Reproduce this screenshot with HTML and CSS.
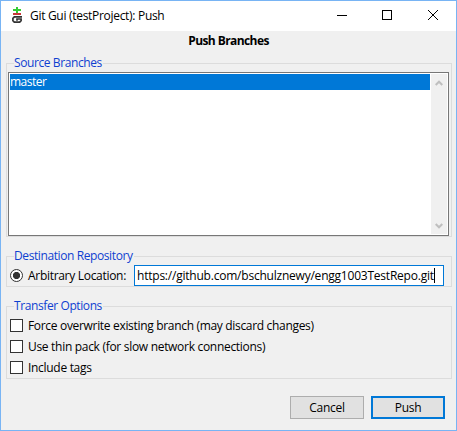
FILE: index.html
```html
<!DOCTYPE html>
<html lang="en">
<head>
<meta charset="utf-8">
<title>Git Gui (testProject): Push</title>
<link rel="stylesheet" href="styles.css">
</head>
<body>
<div class="window">
  <header class="titlebar">
    <svg class="app-icon" width="12" height="16" viewBox="0 0 12 16">
      <path fill="#33cc33" d="M4 0h2v2h3v2H6v2H4V4H1V2h3z"/>
      <path fill="#c83737" d="M1 6h8v2H1z"/>
      <path fill="none" stroke="#333" stroke-width="1.700" d="M10 9.900H2.300L.9 11.300v2.400l1.400 1.400h5.400l1.400-1.400V12H5v1.800"/>
    </svg>
    <span class="title">Git Gui (testProject): Push</span>
    <svg class="controls" width="104" height="12" viewBox="0 0 104 12" fill="none" stroke="#000">
      <path d="M0 6.500h10M45.500 1.500h9v9h-9z" shape-rendering="crispEdges"/>
      <path d="M91 1l10 10M101 1L91 11"/>
    </svg>
  </header>
  <h1 class="heading"><span class="t-head">Push Branches</span></h1>

  <section class="group source">
    <h2 class="legend"><span class="t-source">Source Branches</span></h2>
    <div class="listbox">
      <div class="list"><div class="item"><span class="t-master">master</span></div></div>
      <div class="scrollbar">
        <svg width="8" height="6" viewBox="0 0 8 6"><path d="M.7 5L4 1.700 7.300 5" fill="none" stroke="#bfbfbf" stroke-width="2"/></svg>
        <svg width="8" height="6" viewBox="0 0 8 6"><path d="M.7 1L4 4.300 7.300 1" fill="none" stroke="#bfbfbf" stroke-width="2"/></svg>
      </div>
    </div>
  </section>

  <section class="group destination">
    <h2 class="legend"><span class="t-dest">Destination Repository</span></h2>
    <div class="location">
      <span class="radio"></span>
      <span class="location-label"><span class="t-loc">Arbitrary Location:</span></span>
      <div class="entry"><span class="t-url">https://github.com/bschulznewy/engg1003TestRepo.git</span><i class="caret"></i></div>
    </div>
  </section>

  <section class="group transfer">
    <h2 class="legend"><span class="t-transfer">Transfer Options</span></h2>
    <div class="option"><span class="box"></span><span class="t-force">Force overwrite existing branch (may discard changes)</span></div>
    <div class="option"><span class="box"></span><span class="t-thin">Use thin pack (for slow network connections)</span></div>
    <div class="option"><span class="box"></span><span class="t-tags">Include tags</span></div>
  </section>

  <footer class="actions">
    <div class="button"><span class="t-cancel">Cancel</span></div>
    <div class="button primary"><span class="t-push">Push</span></div>
  </footer>
</div>
</body>
</html>
```
FILE: styles.css
```css
* { box-sizing: border-box; }
body {
  margin: 0;
  font: 12px/16px "Open Sans", "Noto Sans", sans-serif;
  color: #000;
  letter-spacing: -0.3px;
}
h1, h2 { margin: 0; font-size: inherit; }
span { white-space: nowrap; }
svg { display: block; }
.window {
  width: 457px;
  height: 431px;
  border: 1px solid #78b4f4;
  background: #f0f0f0;
  overflow: hidden;
}
.titlebar {
  display: flex;
  height: 30px;
  padding-left: 11px;
  background: #fff;
}
.app-icon { margin-top: 6px; }
.title { margin: 7px 0 0 6px; }
.controls { margin: 8px 15px 0 auto; }
.heading {
  height: 20px;
  padding-top: 2px;
  text-align: center;
  font-weight: 700;
}
.t-head { letter-spacing: -0.58px; }
.group {
  position: relative;
  width: 446px;
  margin-left: 5px;
  border: 1px solid #dcdcdc;
}
.legend {
  position: absolute;
  left: 7px;
  top: -9px;
  padding-right: 1px;
  background: #f0f0f0;
  color: #0f3fd0;
  font-weight: 400;
  letter-spacing: -0.4px;
}
.source { height: 174px; margin-top: 12px; padding: 8px 1px 0; }
.listbox {
  display: flex;
  width: 441px;
  height: 164px;
  padding: 1px;
  border: 1px solid #777;
  background: #fff;
}
.list { width: 420px; margin-right: 1px; }
.item { height: 16px; background: #0078d7; color: #fff; }
.t-master { letter-spacing: -0.5px; }
.scrollbar {
  display: flex;
  flex-direction: column;
  justify-content: space-between;
  align-items: center;
  width: 16px;
  height: 160px;
  padding: 6px 0 5px;
  background: #f0f0f0;
}
.destination { height: 31px; margin-top: 19px; padding: 8px 0 0 3px; }
.location { display: flex; }
.radio {
  width: 13px;
  height: 13px;
  margin-top: 4px;
  border: 1px solid #333;
  border-radius: 50%;
  background: radial-gradient(circle, #333 3.2px, #fff 4px);
}
.location-label { width: 111px; padding: 3px 0 0 5px; }
.entry {
  display: flex;
  width: 310px;
  height: 21px;
  padding: 2px 0 0 2px;
  border: 1px solid #0078d7;
  background: #fff;
}
.t-url { width: 297px; letter-spacing: -0.22px; }
.caret { width: 1px; height: 15px; background: #000; }
.transfer { height: 73px; margin-top: 19px; padding: 8px 0 0 3px; }
.option { display: flex; align-items: center; height: 21px; gap: 5px; }
.t-force { letter-spacing: -0.32px; }
.box { width: 13px; height: 13px; border: 1px solid #333; background: #fff; }
.actions { display: flex; justify-content: flex-end; gap: 7px; margin: 17px 11px 0 0; }
.button {
  width: 74px;
  height: 23px;
  padding-top: 3px;
  border: 1px solid #adadad;
  background: #e1e1e1;
  text-align: center;
}
.primary { padding-top: 2px; border: 2px solid #0078d7; }
```
